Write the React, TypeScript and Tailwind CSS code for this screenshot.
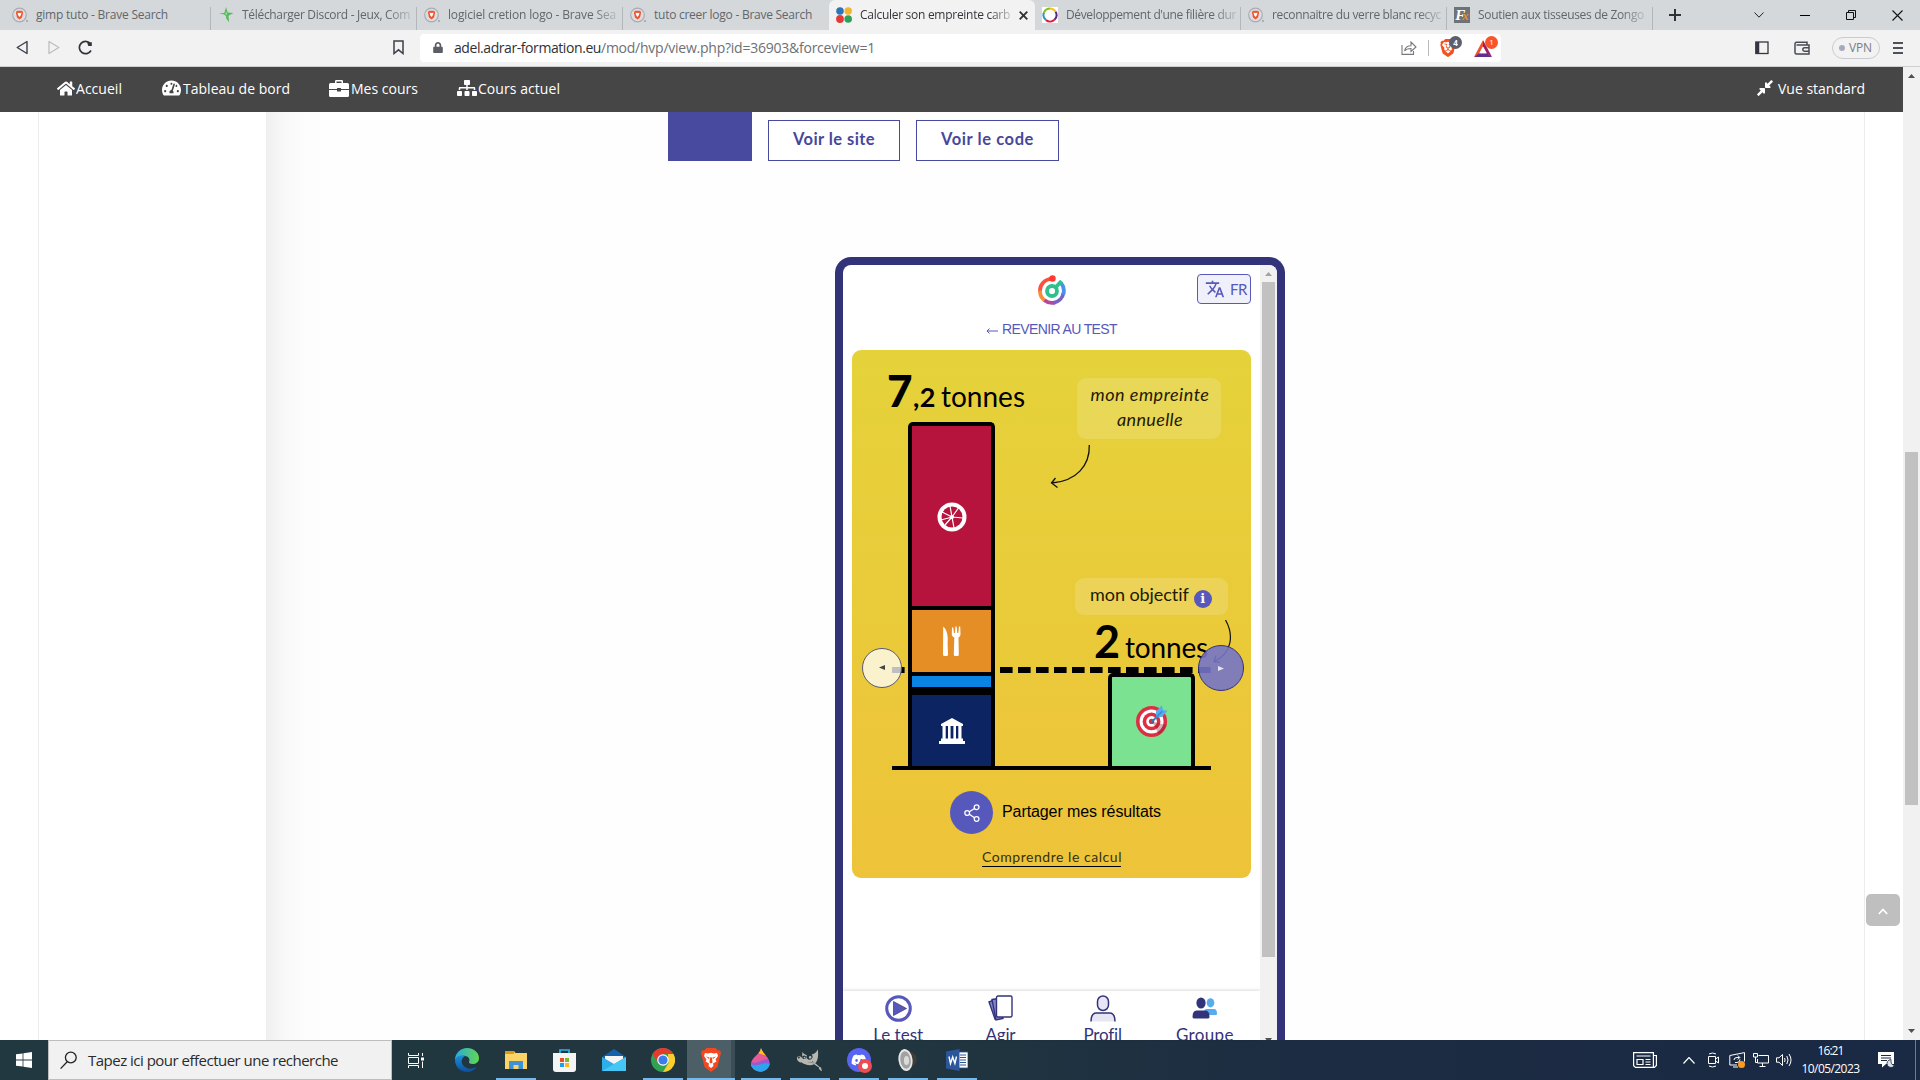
import { useLayoutEffect, useRef, useState } from "react";
import type { ReactNode } from "react";
import { FaTachometerAlt, FaSitemap, FaCompressAlt, FaHome, FaLock, FaDiscord } from "react-icons/fa";
import { SiBrave, SiGimp } from "react-icons/si";

/** Single line of text whose letter spacing is tuned so that it spans `w` pixels. */
function Fit({ w, children, className = "" }: { w: number; children: string; className?: string }) {
  const ref = useRef<HTMLSpanElement>(null);
  const [gap, setGap] = useState(0);
  useLayoutEffect(() => {
    if (ref.current) {
      const natural = ref.current.getBoundingClientRect().width;
      setGap((w - natural) / children.length);
    }
  }, [w, children]);
  return (
    <span ref={ref} className={"inline-block shrink-0 whitespace-pre " + className} style={{ letterSpacing: gap }}>
      {children}
    </span>
  );
}

function BraveFavicon() {
  return (
    <svg className="h-4 w-4 shrink-0" viewBox="0 0 16 16">
      <circle cx="7.5" cy="8" r="6.8" fill="#dcdde0" stroke="#a9abb3" strokeWidth="1.2" />
      <path d="M4.2 4.6 5.5 3.8h4l1.3.8.2 1.6-1 4.2-2.5 2-2.5-2-1-4.2z" fill="#f0552f" />
      <path d="M5.5 5.7 7.5 6l2-.3-.6 2.2-.6 1.2-.8 1-.8-1-.6-1.2z" fill="#fff" />
      <circle cx="15" cy="14" r=".9" fill="#9a9ca4" />
    </svg>
  );
}

function StarFavicon() {
  return (
    <svg className="h-4 w-4 shrink-0" viewBox="0 0 16 16">
      <path d="M0 6h5.3L7 0l1.700 5.500L14.500 6 9.500 8.700l.6 6.500L7.200 11.500 7 9 5 7.500z" fill="#56bd5b" />
      <path d="M7 4.500 8 7l-1.500 1z" fill="#d4d8da" />
    </svg>
  );
}

function DotsFavicon() {
  return (
    <svg className="h-4 w-4 shrink-0" viewBox="0 0 16 16">
      <circle cx="4" cy="4" r="3.800" fill="#2e73b8" />
      <circle cx="12.200" cy="4" r="3.700" fill="#f2b52c" />
      <circle cx="4" cy="12" r="3.900" fill="#e23b35" />
      <circle cx="12.200" cy="12" r="3.800" fill="#31a05a" />
    </svg>
  );
}

function RingFavicon() {
  return (
    <svg className="h-4 w-4 shrink-0 bg-white" viewBox="0 0 16 16" fill="none" strokeWidth="2">
      <path d="M8 1.500a6.500 6.500 0 0 1 5.600 3.200" stroke="#f2c81d" />
      <path d="M13.600 4.700a6.500 6.500 0 0 1-1.200 8" stroke="#5b2583" />
      <path d="M12.400 12.700A6.500 6.500 0 0 1 4 13.100" stroke="#e01b3c" />
      <path d="M4 13.100A6.500 6.500 0 0 1 2 5.500" stroke="#2c96c9" />
      <path d="M2 5.500A6.500 6.500 0 0 1 8 1.500" stroke="#8bbb21" />
    </svg>
  );
}

function FxFavicon() {
  return (
    <span className="flex h-4 w-4 shrink-0 items-center justify-center bg-[#6d7377] font-['Liberation_Serif'] text-[15px] leading-none font-bold italic">
      <span className="text-white">F</span>
      <span className="-ml-[3px] text-[13px] text-[#ee8a2a]">x</span>
    </span>
  );
}

function Tab({ w, pl, tw, icon, text, active = false, line = true, fade = false, gap = 14 }: { w: number; pl: number; tw: number; icon: ReactNode; text: string; active?: boolean; line?: boolean; fade?: boolean; gap?: number }) {
  return (
    <div
      className={
        "relative flex h-[30px] shrink-0 items-center overflow-hidden text-[12px] " +
        (active ? "rounded-t-md bg-[#f2f2f2] text-[#33363b]" : "text-[#62666b]")
      }
      style={{ width: w, paddingLeft: pl }}
    >
      {icon}
      <span
        style={{ marginLeft: gap - 6 }}
        className={"flex " + (fade ? "[mask-image:linear-gradient(to_right,#000_86%,rgba(0,0,0,0.25)_100%)]" : "")}
      >
        <Fit w={tw}>{text}</Fit>
      </span>
      {active && (
        <svg className="ml-[9px] h-[9px] w-[9px]" viewBox="0 0 9 9" stroke="#333" strokeWidth="1.900">
          <path d="M.7.7l7.600 7.600M8.300.7.700 8.300" />
        </svg>
      )}
      {line && <div className="absolute top-[7px] right-0 h-[23px] w-px bg-[#b3b7b9]" />}
    </div>
  );
}

function TabStrip() {
  return (
    <div className="flex h-[30px] bg-[#d4d8da]">
      <Tab w={211} pl={12} tw={132} icon={<BraveFavicon />} text="gimp tuto - Brave Search" />
      <Tab w={206} pl={8} tw={168} gap={13} fade icon={<StarFavicon />} text="Télécharger Discord - Jeux, Com" />
      <Tab w={206} pl={7} tw={168} fade icon={<BraveFavicon />} text="logiciel cretion logo - Brave Sea" />
      <Tab w={206} pl={7} tw={158} icon={<BraveFavicon />} text="tuto creer logo - Brave Search" line={false} />
      <Tab w={206} pl={7} tw={150} fade icon={<DotsFavicon />} text="Calculer son empreinte carb" active line={false} />
      <Tab w={206} pl={7} tw={170} fade icon={<RingFavicon />} text="Développement d'une filière dur" />
      <Tab w={206} pl={7} tw={169} fade icon={<BraveFavicon />} text="reconnaitre du verre blanc recyc" />
      <Tab w={206} pl={7} tw={166} fade icon={<FxFavicon />} text="Soutien aux tisseuses de Zongo" />
      <div className="flex flex-1 items-center text-[#222]">
        <svg className="ml-4 h-3 w-3" viewBox="0 0 12 12" stroke="#303236" strokeWidth="2">
          <path d="M6 0v12M0 6h12" />
        </svg>
        <svg className="ml-[73px] h-[6px] w-[10px]" viewBox="0 0 10 6" fill="none" stroke="#222">
          <path d="M.5.5 5 5.200 9.500.5" />
        </svg>
        <div className="ml-9 h-px w-[10px] bg-black" />
        <svg className="ml-9 h-[10px] w-[10px]" viewBox="0 0 10 10" fill="none" stroke="#111">
          <path d="M.5 2.500h7v7h-7zM2.500 2.500v-2h7v7h-2" />
        </svg>
        <svg className="ml-9 h-[11px] w-[11px]" viewBox="0 0 11 11" stroke="#111" strokeWidth="1.100">
          <path d="M.5.5l10 10M10.500.5l-10 10" />
        </svg>
      </div>
    </div>
  );
}

function Toolbar() {
  return (
    <div className="flex h-[37px] items-center border-b border-[#ccd0d1] bg-[#f2f2f2] pb-px">
      <svg className="ml-4 h-[15px] w-3" viewBox="0 0 12 15" fill="none" stroke="#3b3e4f" strokeWidth="1.400" strokeLinejoin="round">
        <path d="M11 1.500v12L1.200 7.500z" />
      </svg>
      <svg className="ml-[20px] h-[15px] w-3" viewBox="0 0 12 15" fill="none" stroke="#bcbec4" strokeWidth="1.300" strokeLinejoin="round">
        <path d="M1 1.500v12l9.800-6z" />
      </svg>
      <svg className="ml-[18px] h-[15px] w-[15px]" viewBox="0 0 15 15" fill="none" stroke="#33353c" strokeWidth="1.700">
        <path d="M13 10.500A6.200 6.200 0 1 1 12.300 3.500" />
        <path d="M9 2.200h4.800v3.800h-3.500z" fill="#33353c" stroke="none" />
      </svg>
      <svg className="ml-[300px] h-[15px] w-[11px]" viewBox="0 0 11 15" fill="none" stroke="#3d4048" strokeWidth="1.500">
        <path d="M1 1h9v12.500L5.500 9.800 1 13.500z" />
      </svg>
      <div className="ml-4 flex h-7 w-[1081px] items-center rounded bg-white text-[14px]">
        <FaLock className="ml-[13px] h-[11px] w-[10px] text-[#5b5e64]" />
        <span className="ml-[11px] flex">
          <Fit w={147} className="text-[#2f3136]">adel.adrar-formation.eu</Fit>
          <Fit w={274} className="text-[#6d7075]">/mod/hvp/view.php?id=36903&amp;forceview=1</Fit>
        </span>
        <svg className="ml-auto h-[14px] w-[16px]" viewBox="0 0 16 14" fill="none" stroke="#77797e" strokeWidth="1.100">
          <path d="M1 4v9.400h11.500V10" />
          <path d="M3.500 10c.6-3.500 2.800-5.300 6.500-5.300V1l5 5-5 4.500V7.500c-3 0-5 .6-6.500 2.500z" />
        </svg>
        <div className="ml-[11px] h-4 w-px bg-[#b8babd]" />
        <span className="relative mr-[15px] ml-[10px] flex h-[19px] w-[20px] items-center">
          <SiBrave className="h-[20px] w-[18px] text-[#f4511e]" />
          <span className="absolute -top-0.5 left-[10px] flex h-[13px] w-[13px] items-center justify-center rounded-full bg-[#5c5f70] text-[8px] font-bold text-white">4</span>
        </span>
        <span className="relative mr-1 flex h-[18px] w-[23px] items-center">
          <svg className="mt-0.5 h-[17px] w-[18px]" viewBox="0 0 18 16" preserveAspectRatio="none">
            <path d="M9 0 0 16l5-3 4-7z" fill="#f0502a" />
            <path d="m9 0 9 16-5-3-4-7z" fill="#9e1f63" />
            <path d="m0 16 5-3.500h8l5 3.500z" fill="#662d91" />
            <path d="m9 6 3.500 6.500h-7z" fill="#fff" />
          </svg>
          <span className="absolute -top-[3px] left-[11px] flex h-[13px] w-[13px] items-center justify-center rounded-full bg-[#fb542b] text-[8px] text-white">1</span>
        </span>
      </div>
      <svg className="ml-[254px] h-[14px] w-[14px]" viewBox="0 0 14 14" fill="none" stroke="#333640" strokeWidth="1.300">
        <rect x=".8" y="1" width="12.200" height="11.500" />
        <path d="M2.500 1v11" strokeWidth="3.500" />
      </svg>
      <svg className="ml-[25px] h-[14px] w-4" viewBox="0 0 16 14" fill="none" stroke="#4a4c56" strokeWidth="1.500">
        <path d="M13 3.500V1.200H2.500A1.500 1.500 0 0 0 1 2.500v9A1.500 1.500 0 0 0 2.500 13H15V4H2.500" />
        <path d="M15 6.700h-4.500a1.500 1.500 0 0 0 0 3.500H15" />
      </svg>
      <div className="ml-[22px] flex h-[22px] w-12 items-center rounded-full border border-[#c9cbce] pl-[6px] text-[12px] text-[#797b87]">
        <span className="mr-[4px] h-[6px] w-[6px] rounded-full bg-[#a8aabb]" />
        <Fit w={23}>VPN</Fit>
      </div>
      <div className="ml-[13px] flex flex-col gap-[3px]">
        <span className="h-[2px] w-[10px] bg-[#4f525b]" />
        <span className="h-[2px] w-[10px] bg-[#4f525b]" />
        <span className="h-[2px] w-[10px] bg-[#4f525b]" />
      </div>
    </div>
  );
}

function SiteNav() {
  return (
    <nav className="flex h-[45px] shrink-0 items-center bg-[#464646] pb-[3px] text-[14px] text-white">
      <FaHome className="ml-[57px] h-[17px] w-[18px]" />
      <span className="ml-px flex"><Fit w={46}>Accueil</Fit></span>
      <FaTachometerAlt className="ml-[40px] h-[18px] w-[19px]" />
      <span className="ml-[2px] flex"><Fit w={107}>Tableau de bord</Fit></span>
      <svg className="ml-[39px] h-[17px] w-5" viewBox="0 0 20 17" fill="#fff">
        <path d="M6 3V1.200Q6 0 7.200 0h5.600Q14 0 14 1.200V3h4.500Q20 3 20 4.500V9H12V8H8v1H0V4.500Q0 3 1.500 3zm1.500 0h5V1.500h-5z" />
        <path d="M0 10h8v1.500h4V10h8v5.500q0 1.500-1.500 1.500h-17Q0 17 0 15.500z" />
      </svg>
      <span className="ml-[2px] flex"><Fit w={67}>Mes cours</Fit></span>
      <FaSitemap className="ml-[39px] h-[18px] w-5" />
      <span className="ml-[1px] flex"><Fit w={82}>Cours actuel</Fit></span>
      <FaCompressAlt className="ml-auto h-[18px] w-[18px]" />
      <span className="mr-[38px] ml-[4px] flex"><Fit w={87}>Vue standard</Fit></span>
    </nav>
  );
}

function FruitIcon() {
  return (
    <svg className="mt-px ml-px h-[30px] w-[30px]" viewBox="-15 -15 30 30">
      <circle r="14.500" fill="#fff" />
      <circle r="10.500" fill="#b6143d" />
      <g stroke="#fff" strokeWidth="1.200">
        <path d="M0 0-2-11M0 0 6.500-9M0 0 11 1M0 0 2 11M0 0-7 8M0 0-11 3M0 0-10-5" />
      </g>
      <circle r="2" fill="#fff" />
    </svg>
  );
}

function CutleryIcon() {
  return (
    <svg className="h-[30px] w-[20px]" viewBox="0 0 20 30" fill="#fff">
      <path d="M1.200.5c3.500 3 5.200 9 4.400 16l.4 12a1.500 1.500 0 0 1-1.500 1.500h-2A1.500 1.500 0 0 1 1 28.500z" />
      <path d="M10 1.500h1.200L12 7h1l.4-6.500h1.200L15.300 7h1L17 .5h1.200L18.500 8c0 2-.8 3-2 3.600l.3 17a1.500 1.500 0 0 1-1.500 1.500h-2a1.500 1.500 0 0 1-1.500-1.500l.5-17C10.800 11 9.800 10 9.800 8z" />
    </svg>
  );
}

function BankIcon() {
  return (
    <svg className="h-[26px] w-[26px]" viewBox="0 0 26 26" fill="#fff">
      <path d="M13 0 24 6v2H2V6z" />
      <path d="M3.500 7.500h3.200v13.500H3.500zM9 7.500h2.600v13.500H9zM14.400 7.500H17v13.500h-2.600zM19.300 7.500h3.200v13.500h-3.200z" />
      <path d="M2 20.500h22V23h2v3H0v-3h2z" />
    </svg>
  );
}

function TargetIcon() {
  return (
    <svg className="h-8 w-8" viewBox="0 0 36 36">
      <circle cx="17.500" cy="18.500" r="17.500" fill="#dd2e44" />
      <circle cx="17.500" cy="18.500" r="13.500" fill="#fff" />
      <circle cx="17.500" cy="18.500" r="10" fill="#dd2e44" />
      <circle cx="17.500" cy="18.500" r="6" fill="#fff" />
      <circle cx="17.500" cy="18.500" r="3" fill="#dd2e44" />
      <path d="m18.200 18.600 7.500 14.500a17 17 0 0 0 8-10.500z" fill="#8c1427" opacity=".35" />
      <path d="M17.600 19.200 27 9.500" stroke="#2a78b4" strokeWidth="2.200" strokeLinecap="round" />
      <path d="M22.500 14 22.500 7 29 .3 30.500 5.500l5 1L29 13.500z" fill="#55acee" />
      <path d="M20.500 16 29.500 7" stroke="#3b88c3" strokeWidth="1.800" />
    </svg>
  );
}

function ResultCard() {
  return (
    <div className="h-[528px] w-[399px] rounded-[9px] bg-linear-to-b from-[#e5d23a] to-[#eec339] font-['Lato'] text-black">
      <div className="relative flex h-[420px]">
        <div className="w-[190px]">
          <div className="flex h-[72px] items-baseline pl-[35px]">
            <Fit w={26} className="text-[44px] leading-[81px] font-black">7</Fit>
            <Fit w={23} className="text-[27px] font-bold">,2</Fit>
            <span className="ml-[5px] flex items-baseline"><Fit w={84} className="text-[28px]">tonnes</Fit></span>
          </div>
          <div className="relative z-10 ml-[56px] flex w-[87px] flex-col rounded-t-[5px] border-4 border-b-0 border-black bg-black">
            <div className="flex h-[180px] items-center justify-center bg-[#b6143d]"><FruitIcon /></div>
            <div className="mt-1 flex h-[62px] items-center justify-center bg-[#e58e26]"><CutleryIcon /></div>
            <div className="mt-1 h-[11px] bg-[#0a84e2]" />
            <div className="mt-2 flex h-[71px] items-center justify-center bg-[#0c2461]"><BankIcon /></div>
          </div>
        </div>
        <div className="w-[209px]">
          <div className="mt-[28px] ml-[35px] flex h-[61px] w-[144px] flex-col items-center justify-center rounded-[9px] bg-white/15 pb-[3px] pl-[2px] text-[18px] leading-[25px] text-[#1d1a05] italic">
            <Fit w={119}>mon empreinte</Fit>
            <Fit w={66}>annuelle</Fit>
          </div>
          <svg className="mt-[5px] ml-[8px] h-[46px] w-[42px]" viewBox="0 0 42 46" fill="none" stroke="#111" strokeWidth="1.300">
            <path d="M39.300 1C40 22 26 37 2 39" />
            <path d="M5.500 34 1.500 39l6 4.500" />
          </svg>
          <div className="mt-[88px] ml-[33px] flex h-[37px] w-[153px] items-center rounded-[9px] bg-white/15 pl-[15px] text-[18px] text-[#1d1a05]">
            <span className="-mt-[5px] flex"><Fit w={99}>mon objectif</Fit></span>
            <span className="mt-1 ml-[5px] flex h-[18px] w-[18px] items-center justify-center rounded-full bg-[#5758bb] font-['DejaVu_Serif'] text-[13px] leading-none font-bold text-white">i</span>
          </div>
          <div className="flex h-[58px] items-baseline pl-[52px] whitespace-nowrap">
            <Fit w={31} className="text-[45px] leading-[52px] font-bold">2</Fit>
            <Fit w={83} className="text-[28px]">tonnes</Fit>
          </div>
          <div className="relative ml-[66px] flex h-[93px] w-[87px] items-center justify-center rounded-t-[5px] border-4 border-b-0 border-black bg-[#7be291] pb-px"><TargetIcon /></div>
        </div>
        <svg className="absolute top-[270px] left-[355px] h-[45px] w-[30px]" viewBox="0 0 30 45" fill="none" stroke="#111" strokeWidth="1.200">
          <path d="M18.500 0C27 15 25 33 8 41M9 35.500l-2 6 6 .8" />
        </svg>
        <svg className="absolute top-[317px] left-[40px] h-[6px] w-[319px]" viewBox="0 0 319 6" preserveAspectRatio="none">
          <path d="M0 3h319" stroke="#000" strokeWidth="6" strokeDasharray="12.600 5.400" />
        </svg>
        <div className="absolute top-[416px] left-[40px] z-10 h-1 w-[319px] bg-black" />
        <div className="absolute top-[298px] left-[10px] z-20 flex h-10 w-10 items-center justify-center rounded-full border border-[#57577a] bg-white/75 pb-px">
          <svg className="h-[5px] w-[6px]" viewBox="0 0 6 5"><path d="M6 0v5L0 2.500z" fill="#444" /></svg>
        </div>
        <div className="absolute top-[295px] left-[346px] z-20 flex h-[46px] w-[46px] items-center justify-center rounded-full border border-[#33337a] bg-[#7474c6]/90">
          <svg className="h-[5px] w-[6px]" viewBox="0 0 6 5"><path d="M0 0v5l6-2.500z" fill="#e4e4f2" /></svg>
        </div>
      </div>
      <div className="mt-[21px] flex items-center pl-[98px] font-['Liberation_Sans'] text-[16px]">
        <div className="flex h-[43px] w-[43px] items-center justify-center rounded-full bg-[#5758bb]">
          <svg className="h-[18px] w-4" viewBox="0 0 16 18" fill="none" stroke="#fff" strokeWidth="1.300">
            <circle cx="12.600" cy="3.200" r="2.400" />
            <circle cx="3.200" cy="9" r="2.400" />
            <circle cx="12.600" cy="15" r="2.400" />
            <path d="M5.300 7.700 10.500 4.500M5.300 10.300l5.200 3.400" />
          </svg>
        </div>
        <span className="-mt-0.5 ml-[9px] flex"><Fit w={159}>Partager mes résultats</Fit></span>
      </div>
      <div className="mt-[14px] ml-[130px] flex h-[19px] w-[139px] items-center border-b border-black pb-[2px] text-[14px] text-[#38300e]">
        <Fit w={140}>Comprendre le calcul</Fit>
      </div>
    </div>
  );
}

function PhoneTab({ icon, w, label }: { icon: ReactNode; w: number; label: string }) {
  return (
    <div className="flex flex-col items-center">
      <div className="flex h-[28px] items-center">{icon}</div>
      <Fit w={w}>{label}</Fit>
    </div>
  );
}

function Phone() {
  return (
    <div className="flex h-[783px] w-[450px] rounded-t-[16px] border-8 border-b-0 border-[#33337a] bg-white">
      <div className="flex w-[417px] flex-col">
        <div className="flex h-[49px] items-center justify-between pr-[9px] pl-[195px]">
          <svg className="mt-px h-[30px] w-[28px]" viewBox="0 0 28 30" fill="none" strokeWidth="3.800">
            <path d="M14 3.900A12 12 0 0 0 2 17" stroke="#f9513b" />
            <path d="M2 15.500A12 12 0 0 0 7.500 26" stroke="#fb8a3c" />
            <path d="M6.500 25.300A12 12 0 0 0 17 27.500" stroke="#b3489d" />
            <path d="M15.500 27.800A12 12 0 0 0 25.500 18" stroke="#7662c9" />
            <path d="M25.200 19.500A12 12 0 0 0 23 8" stroke="#4a93ea" />
            <circle cx="14.500" cy="3.500" r="3.200" fill="#fb3a32" stroke="none" />
            <circle cx="14" cy="16" r="5" stroke="#2fc08d" />
            <path d="m17.500 12.500 6-6.500" stroke="#2fc08d" />
          </svg>
          <div className="-mt-px flex h-[30px] w-[54px] items-center rounded-[4px] border border-[#5758bb] bg-[#f0f0fa] pl-[7px] font-['Lato'] text-[15px] text-[#5758bb]">
            <svg className="h-5 w-5" viewBox="0 0 24 24" fill="#5758bb">
              <path d="m12.870 15.070-2.540-2.510.03-.03A17.520 17.520 0 0 0 14.070 6H17V4h-7V2H8v2H1v1.990h11.170C11.500 7.920 10.440 9.750 9 11.350 8.070 10.320 7.300 9.190 6.690 8h-2c.73 1.630 1.730 3.170 2.980 4.560l-5.090 5.020L4 19l5-5 3.110 3.110.76-2.040zM18.500 10h-2L12 22h2l1.120-3h4.750L21 22h2l-4.500-12zm-2.620 7 1.620-4.330L19.120 17h-3.240z" />
            </svg>
            <span className="ml-[5px] flex"><Fit w={17}>FR</Fit></span>
          </div>
        </div>
        <div className="flex h-[36px] items-center justify-center pb-[5px] font-['Liberation_Sans'] text-[14px] text-[#5758bb]">
          <svg className="mt-[3px] mr-1 h-2 w-3" viewBox="0 0 12 8" fill="none" stroke="#5758bb"><path d="M12 4H1M3.500 1.500 1 4l2.500 2.500" /></svg>
          <Fit w={115}>REVENIR AU TEST</Fit>
        </div>
        <div className="pl-[9px]"><ResultCard /></div>
        <div className="mt-[113px] grid h-[49px] grid-cols-4 overflow-hidden bg-white px-1 pt-[3px] font-['Lato'] text-[17px] text-[#33337a] shadow-[0_-1px_3px_rgba(0,0,0,0.15)]">
          <PhoneTab
            w={50}
            label="Le test"
            icon={
              <svg className="h-[27px] w-[27px]" viewBox="0 0 27 27">
                <circle cx="13.500" cy="13.500" r="11.800" fill="#fff" stroke="#5758bb" strokeWidth="3" />
                <path d="M8.500 6.500v14l13-7z" fill="#5758bb" stroke="#33337a" strokeWidth=".7" />
              </svg>
            }
          />
          <PhoneTab
            w={30}
            label="Agir"
            icon={
              <svg className="h-[26px] w-[25px]" viewBox="0 0 25 26" stroke="#33337a" strokeWidth="1.400">
                <path d="m1 7 5-2 5 17-4 2z" fill="#8587ca" />
                <path d="m4 4.500 6-1 5 20-7 1.500z" fill="#8587ca" />
                <rect x="8.500" y="1" width="15.500" height="21" rx="1.500" fill="#fff" />
              </svg>
            }
          />
          <PhoneTab
            w={38}
            label="Profil"
            icon={
              <svg className="h-[27px] w-[26px]" viewBox="0 0 26 27" fill="#e6e6f5" stroke="#33337a" strokeWidth="1.500">
                <rect x="7.500" y="1" width="11" height="14.500" rx="5.500" />
                <path d="M1 26.500c0-6 1.500-8.500 5.500-8.500h13c4 0 5.500 2.500 5.500 8.500" />
              </svg>
            }
          />
          <PhoneTab
            w={58}
            label="Groupe"
            icon={
              <svg className="h-[22px] w-[26px]" viewBox="0 0 26 22">
                <ellipse cx="18.500" cy="5.800" rx="3.800" ry="4.600" fill="#55acee" />
                <path d="M12 18v-3q0-3 3-3h7q3 0 3 5 0 1-1 1z" fill="#55acee" />
                <ellipse cx="9" cy="6" rx="4.600" ry="5.600" fill="#33337a" />
                <path d="M.5 20q0-6.500 4-6.500h9q4 0 4 6.500 0 1.500-2 1.500H2.500Q.5 21.500.5 20z" fill="#33337a" />
              </svg>
            }
          />
        </div>
      </div>
      <div className="flex w-[17px] flex-col items-center rounded-tr-lg bg-[#f1f1f1]">
        <svg className="mt-[7px] h-1 w-[7px]" viewBox="0 0 7 4"><path d="M0 4 3.500 0 7 4z" fill="#a3a3a3" /></svg>
        <div className="mt-[6px] h-[675px] w-[13px] bg-[#c1c1c1]" />
        <svg className="mt-auto h-[2px] w-[7px]" viewBox="0 0 7 2"><path d="M0 0h7L5.500 2h-4z" fill="#505050" /></svg>
      </div>
    </div>
  );
}

function Page() {
  return (
    <div className="flex h-[973px]">
      <div className="flex w-[1903px] flex-col">
        <SiteNav />
        <div className="flex h-[928px] font-['Lato']">
          <div className="w-[39px] border-r border-[#ececec] bg-white" />
          <div className="w-[227px] bg-white" />
          <div className="flex w-[1599px] flex-col border-r border-[#ececec] bg-[linear-gradient(to_right,#efefef_0px,#f8f8f8_18px,#fdfdfd_40px,#fefefe_100px)]">
            <div className="flex h-[49px] items-end gap-4 pl-[402px] text-[16.500px] font-bold text-[#46489d]">
              <div className="h-[49px] w-[84px] bg-[#484a9f]" />
              <div className="flex h-[41px] w-[132px] items-center justify-center border border-[#484a9f] bg-white pb-[3px]"><Fit w={82}>Voir le site</Fit></div>
              <div className="flex h-[41px] w-[143px] items-center justify-center border border-[#484a9f] bg-white pb-[3px]"><Fit w={93}>Voir le code</Fit></div>
            </div>
            <div className="mt-[96px] pl-[569px]"><Phone /></div>
          </div>
          <div className="flex flex-1 flex-col bg-white pt-[782px] pl-px">
            <div className="flex h-8 w-[34px] items-center justify-center rounded-[5px] bg-[#bfbfbf]">
              <svg className="mt-0.5 h-[7px] w-[10px]" viewBox="0 0 10 7" fill="none" stroke="#fff" strokeWidth="1.700"><path d="m.8 6 4.200-4.500L9.200 6" /></svg>
            </div>
          </div>
        </div>
      </div>
      <div className="flex w-[17px] flex-col items-center bg-[#f1f1f1]">
        <svg className="mt-[7px] h-1 w-[7px]" viewBox="0 0 7 4"><path d="M0 4 3.500 0 7 4z" fill="#505050" /></svg>
        <div className="mt-[374px] h-[353px] w-[13px] bg-[#c1c1c1]" />
        <svg className="mt-auto mb-[7px] h-1 w-[7px]" viewBox="0 0 7 4"><path d="M0 0 3.500 4 7 0z" fill="#505050" /></svg>
      </div>
    </div>
  );
}

function Task({ w, children, open = false, active = false }: { w: number; children: ReactNode; open?: boolean; active?: boolean }) {
  return (
    <div className={"relative flex h-10 shrink-0 items-center justify-center " + (active ? "bg-[#4c5f67] pl-[3px]" : "")} style={{ width: w }}>
      {children}
      {open && <div className={"absolute bottom-0 h-[2px] bg-[#76b9ed] " + (active ? "inset-x-0" : "inset-x-[4.500px]")} />}
    </div>
  );
}

function Taskbar() {
  return (
    <div className="flex h-10 items-center bg-[linear-gradient(to_right,#213840_0px,#21363f_900px,#1c2c42_1300px,#1a2944_1920px)]">
      <div className="flex w-12 justify-center">
        <svg className="h-4 w-4" viewBox="0 0 16 16" fill="#fff"><path d="M0 2.300 6.600 1.400v6.200H0zM7.400 1.300 16 0v7.600H7.400zM0 8.400h6.600v6.200L0 13.700zM7.400 8.400H16V16l-8.600-1.300z" /></svg>
      </div>
      <div className="flex h-10 w-[344px] items-center border border-[#bdbdbd] bg-[#f1f1f1] pl-[11px] text-[15px] text-[#2b2b2b]">
        <svg className="h-[19px] w-[17px]" viewBox="0 0 17 19" fill="none" stroke="#222" strokeWidth="1.300"><circle cx="10.800" cy="6.500" r="5.400" /><path d="M7.200 10.800.6 17.600" /></svg>
        <span className="ml-[11px] flex"><Fit w={250}>Tapez ici pour effectuer une recherche</Fit></span>
      </div>
      <div className="flex w-[50px] justify-center pr-[2px]">
        <svg className="h-[15px] w-4" viewBox="0 0 16 15" fill="none" stroke="#fff">
          <path d="M.5 0v2.500h10V0M.5 4.500h10v6H.5zM.5 15v-2.500h10V15M14.500 0v3M14.500 8.500V15" />
          <path d="M13 4.500h3v3h-3z" fill="#fff" stroke="none" />
        </svg>
      </div>
      <Task w={49}>
        <svg className="h-6 w-6" viewBox="0 0 24 24">
          <defs>
            <linearGradient id="edgeTop" x1="0" x2="1"><stop offset="0" stopColor="#2aa9e0" /><stop offset="1" stopColor="#62d84e" /></linearGradient>
            <linearGradient id="edgeLow" x1="0" y1="0" x2="0" y2="1"><stop offset="0" stopColor="#1b8fd6" /><stop offset="1" stopColor="#0c4f9e" /></linearGradient>
          </defs>
          <path d="M0 12C0 5 5.500 0 12 0s12 4.500 12 10c0 4-3 6-6.500 6-2.500 0-4-1-3.500-2.200.9-1.500.8-4.800-3.500-5.800C6 7 1.500 9 0 12z" fill="url(#edgeTop)" />
          <path d="M0 12C1.500 8 6 6.800 10 8c-3 1.500-4 4.500-3 7.500 2 5 8.500 7 14.500 3.500C19 22.500 16 24 12.500 24 5 24 0 18.500 0 12z" fill="url(#edgeLow)" />
        </svg>
      </Task>
      <Task w={49} open>
        <svg className="h-[18px] w-[22px]" viewBox="0 0 22 18">
          <path d="M0 0h9l1.500 2H22v16H0z" fill="#fbd366" />
          <path d="M0 0h9v3H0z" fill="#dc9a16" />
          <path d="M4 18v-8h14v8h-4.500v-4h-5v4z" fill="#3e91d6" />
        </svg>
      </Task>
      <Task w={49}>
        <svg className="h-[23px] w-[23px]" viewBox="0 0 23 23">
          <path d="M7 5V1h9v4" fill="none" stroke="#2fb2ec" strokeWidth="1.700" />
          <path d="M0 4h23v16q0 3-3 3H3q-3 0-3-3z" fill="#f4f4f4" />
          <path d="M7 9h4v4H7z" fill="#e8502a" /><path d="M12 9h4v4h-4z" fill="#7fba2a" />
          <path d="M7 14h4v4H7z" fill="#1f9fe8" /><path d="M12 14h4v4h-4z" fill="#fbb81a" />
        </svg>
      </Task>
      <Task w={49}>
        <svg className="h-[22px] w-6" viewBox="0 0 24 22">
          <path d="M0 8 12 0l12 8v5H0z" fill="#1361ad" />
          <path d="M3 7h18v8H3z" fill="#f4f4f4" />
          <path d="m0 8 12 7L24 8v14H0z" fill="#2eaee9" />
          <path d="M0 22 24 8v14z" fill="#45c6f5" />
        </svg>
      </Task>
      <Task w={49} open>
        <svg className="h-6 w-6" viewBox="0 0 24 24">
          <circle cx="12" cy="12" r="12" fill="#31a350" />
          <path d="M1.600 6A12 12 0 0 1 22.400 6H12L7 14.500z" fill="#e33b2e" />
          <path d="M22.400 6A12 12 0 0 1 12 24l5.500-9L17 6z" fill="#fdcd2c" />
          <circle cx="12" cy="12" r="5.800" fill="#fff" /><circle cx="12" cy="12" r="4.600" fill="#3b7ded" />
        </svg>
      </Task>
      <div className="flex w-[49px]">
        <Task w={44} open active>
          <svg className="h-6 w-5" viewBox="0 0 20 24">
            <path d="M5.500 0h9L17 2.500l2-.3 1 3-1 3.300L16.500 19 10 24l-6.500-5L1 8.500 0 5.200l1-3 2 .3z" fill="#f5461f" />
            <path d="m4 5 3 .5 3-.8 3 .8 3-.5 1 3-2.500 3.500 1 2-3.500 2 .5 2.500L10 20l-2.500-2 .5-2.500-3.500-2 1-2L3 8z" fill="#fff" />
            <path d="m5 8.500 3.500 1L8 11zM15 8.500l-3.500 1L12 11zM9 9.500h2l.5 5-1.500 1-1.500-1z" fill="#f5461f" />
          </svg>
        </Task>
        <div className="h-10 w-1 border-b-2 border-[#76b9ed] bg-[#3b4d56]" />
      </div>
      <Task w={49} open>
        <svg className="h-6 w-[19px]" viewBox="0 0 19 24">
          <defs><clipPath id="dropClip"><path d="M10 0C11 5 19 9 18.500 16.500A9.300 8 0 0 1 0 16.500C0 9 9 7 10 0z" /></clipPath></defs>
          <g clipPath="url(#dropClip)">
            <path d="M0 0h19v24H0z" fill="#e85a97" />
            <path d="M7 0h12v9L7 5z" fill="#fcc80d" />
            <path d="M0 14c8 3 10-4 19-3v8L0 20z" fill="#9a59cf" />
            <path d="M0 16c7 4 12-3 19 0v8H0z" fill="#2aa5ee" />
          </g>
        </svg>
      </Task>
      <Task w={49} open><SiGimp className="h-[25px] w-[25px] text-[#b7b7b0]" /></Task>
      <Task w={49} open>
        <span className="relative flex h-6 w-6 items-center justify-center rounded-full bg-[#5865f2]">
          <FaDiscord className="h-4 w-4 text-white" />
          <span className="absolute -right-px -bottom-px flex h-[14px] w-[14px] items-center justify-center rounded-full bg-[#ed4d50]"><span className="h-[6px] w-[6px] rounded-full bg-white" /></span>
        </span>
      </Task>
      <Task w={49} open>
        <svg className="h-[22px] w-[19px]" viewBox="0 0 19 22">
          <path d="M7 0q12 4 12 10T9 22z" fill="#3c3c3a" />
          <ellipse cx="7.500" cy="11" rx="7" ry="11" fill="#e6e6e6" transform="rotate(-8 7.500 11)" />
          <ellipse cx="7.500" cy="11" rx="5.200" ry="8.800" fill="#a2a2a2" transform="rotate(-8 7.500 11)" />
          <ellipse cx="8.500" cy="11.500" rx="2.600" ry="4.500" fill="#dadada" />
        </svg>
      </Task>
      <Task w={49} open>
        <svg className="h-[22px] w-[22px]" viewBox="0 0 22 22">
          <path d="M11 3h11v16H11z" fill="#fff" stroke="#2b579a" strokeWidth=".8" />
          <path d="M14 6h6M14 8.500h6M14 11h6M14 13.500h6M14 16h6" stroke="#2b579a" />
          <path d="M0 2.500 13.500 0v22L0 19.500z" fill="#2b579a" />
          <path d="m3 7.500 1.500 7L6.700 8l2.200 6.500 1.600-7" fill="none" stroke="#fff" strokeWidth="1.400" />
        </svg>
      </Task>
      <svg className="ml-[652px] h-4 w-6" viewBox="0 0 24 16" fill="none" stroke="#fff" strokeWidth="1.200">
        <path d="M.6.6h19.800v14.800H2.500L.6 13.800zM20.500 3.500h2.900v10l-2 1.900h-2" />
        <path d="M3.500 4h14M12.500 7.500h5M12.500 10h5M12.500 12.500h5M4 7.500h6v5H4z" />
      </svg>
      <svg className="ml-[26px] h-[7px] w-3" viewBox="0 0 12 7" fill="none" stroke="#fff" strokeWidth="1.200"><path d="m.5 6.500 5.500-6 5.500 6" /></svg>
      <svg className="ml-[12px] h-4 w-3" viewBox="0 0 12 16" fill="none" stroke="#fff"><path d="M2 2q3.500-2 7 0M2 14q3.500 2 7 0M1.500 4.500h7v7h-7zM8.500 7l3-2v6l-3-2" /></svg>
      <svg className="ml-[10px] h-4 w-4" viewBox="0 0 16 16" fill="none" stroke="#fff">
        <path d="M.8 3.500 15.500.6v9M.8 3.500V13H8M4 15h5M5 8q0-2.500 3-2.500h2.500M8.800 3.500l2 2-2 2M11 7.500q0 3-3 3H6" />
        <circle cx="12.500" cy="12.500" r="3.500" fill="#ff9a1a" stroke="none" />
      </svg>
      <svg className="ml-2 h-[14px] w-4" viewBox="0 0 16 14" fill="none" stroke="#fff"><path d="M5.500 2.500h10v7.500H4.500V6M9.500 10v3M6.500 13.500h6M.5.500h4v3.500h-4zM2.500 4v5.500h2" /></svg>
      <svg className="ml-[7px] h-[14px] w-4" viewBox="0 0 16 14" fill="none" stroke="#fff"><path d="M.5 4.800h2.500L6.500 1.500v11L3 9.200H.5zM8.500 5q1.200 2 0 4M10.800 3q2.500 4 0 8M13 1q4 6 0 12" /></svg>
      <div className="ml-[10px] flex w-[57px] flex-col items-center text-[12px] leading-[18px] text-white">
        <Fit w={26}>16:21</Fit>
        <Fit w={58}>10/05/2023</Fit>
      </div>
      <svg className="ml-[19px] h-4 w-[17px]" viewBox="0 0 17 16">
        <path d="M0 0h16v12H8l-4 3.500V12H0z" fill="#fff" />
        <path d="M3 3.500h10M3 6h10M3 8.500h6" stroke="#1a2944" />
        <path d="M13 7.500a4 4 0 1 0 3.500 6q-4-.5-3.500-6z" fill="#dfe2e8" stroke="#1a2944" strokeWidth=".8" />
      </svg>
      <div className="ml-auto h-10 w-[5px] border-l border-[#6f7a8b]" />
    </div>
  );
}

export default function App() {
  return (
    <div className="h-[1080px] w-[1920px] overflow-hidden bg-white font-['Open_Sans',sans-serif]">
      <TabStrip />
      <Toolbar />
      <Page />
      <Taskbar />
    </div>
  );
}
